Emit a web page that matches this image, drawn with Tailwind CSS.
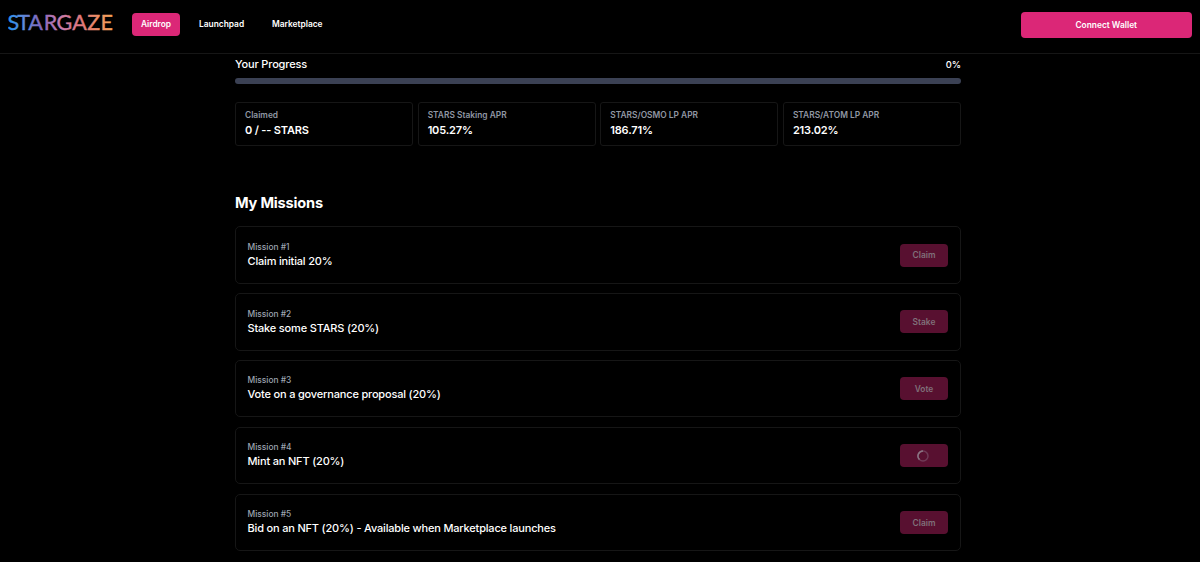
<!DOCTYPE html>
<html lang="en">
<head>
  <meta charset="UTF-8" />
  <meta name="viewport" content="width=device-width, initial-scale=1.0" />
  <title>Stargaze Airdrop</title>
  <script src="https://cdn.jsdelivr.net/npm/@tailwindcss/browser@4"></script>
</head>
<body class="h-screen overflow-hidden bg-black text-white font-['Inter',sans-serif]">
  <header class="flex h-[54px] items-start border-b border-[#161616] pl-2 pr-2">
    <svg class="mt-[10px] h-6 w-[106px]" viewBox="0 0 106 24" role="img" aria-label="Stargaze">
      <defs>
        <linearGradient id="logo" x1="0" y1="20" x2="104" y2="4" gradientUnits="userSpaceOnUse">
          <stop offset="0" stop-color="#2590ee" />
          <stop offset="0.15" stop-color="#5b8bdc" />
          <stop offset="0.32" stop-color="#8367bd" />
          <stop offset="0.5" stop-color="#c77cae" />
          <stop offset="0.7" stop-color="#e27779" />
          <stop offset="1" stop-color="#f5a356" />
        </linearGradient>
      </defs>
      <text x="-0.5 9.2 20.3 35.8 48.4 64.2 79.3 92.6" y="19.8" fill="url(#logo)" stroke="url(#logo)" stroke-width="0.4" class="font-['Lato',sans-serif] text-[21.5px]">STARGAZE</text>
    </svg>

    <nav class="ml-[18px] mt-[12.5px] flex h-[23.5px] items-center text-[8.4px] leading-[13px] font-semibold">
      <a href="#" class="flex h-[23.5px] w-12 items-center justify-center rounded-[4px] bg-[#db2777] pt-[1px]">Airdrop</a>
      <a href="#" class="ml-[19px] w-[73px] pt-[1px]">Launchpad</a>
      <a href="#" class="pt-[1px]">Marketplace</a>
    </nav>

    <button class="ml-auto mt-[11.5px] h-[26px] w-[171.5px] rounded-[4px] bg-[#db2777] pt-[1px] text-[8.4px] font-semibold">Connect Wallet</button>
  </header>

  <main class="ml-[235px] w-[726px]">
    <div class="flex h-[24px] items-start justify-between pt-[2px] leading-[17px]">
      <span class="text-[11px] font-medium tracking-[-0.16px]">Your Progress</span>
      <span class="text-[9.33px] font-medium">0%</span>
    </div>
    <div class="h-[5.5px] rounded-full bg-[#3b4154]"></div>

    <dl class="mt-[18.5px] grid grid-cols-4 gap-[4.5px]">
      <div class="h-11 rounded-[3px] border border-[#161616] pl-[9px] pt-[6px]">
        <dt class="text-[8.4px] leading-[13px] font-semibold text-[#9097a3]">Claimed</dt>
        <dd class="text-[11px] leading-[17px] font-semibold tracking-[-0.16px]">0 / -- STARS</dd>
      </div>
      <div class="h-11 rounded-[3px] border border-[#161616] pl-[9px] pt-[6px]">
        <dt class="text-[8.4px] leading-[13px] font-semibold text-[#9097a3]">STARS Staking APR</dt>
        <dd class="text-[11px] leading-[17px] font-semibold tracking-[-0.16px]">105.27%</dd>
      </div>
      <div class="h-11 rounded-[3px] border border-[#161616] pl-[9px] pt-[6px]">
        <dt class="text-[8.4px] leading-[13px] font-semibold text-[#9097a3]">STARS/OSMO LP APR</dt>
        <dd class="text-[11px] leading-[17px] font-semibold tracking-[-0.16px]">186.71%</dd>
      </div>
      <div class="h-11 rounded-[3px] border border-[#161616] pl-[9px] pt-[6px]">
        <dt class="text-[8.4px] leading-[13px] font-semibold text-[#9097a3]">STARS/ATOM LP APR</dt>
        <dd class="text-[11px] leading-[17px] font-semibold tracking-[-0.16px]">213.02%</dd>
      </div>
    </dl>

    <h2 class="mt-[45px] text-[14.6px] leading-6 font-bold tracking-[-0.2px]">My Missions</h2>

    <ul class="mt-[11.3px] flex flex-col gap-[9.35px]">
      <li class="flex h-[57.5px] items-center justify-between rounded-[5px] border border-[#161616] pl-[11.5px] pr-[12px]">
        <div>
          <p class="text-[8.4px] leading-[12px] font-medium text-[#9ca3af]">Mission #1</p>
          <p class="text-[11px] leading-[16.6px] font-medium tracking-[-0.18px]">Claim initial 20%</p>
        </div>
        <button class="h-[23px] w-12 rounded-[4px] bg-[#581030] pt-[1px] text-[8.4px] font-semibold text-[#80707a]" disabled>Claim</button>
      </li>
      <li class="flex h-[57.5px] items-center justify-between rounded-[5px] border border-[#161616] pl-[11.5px] pr-[12px]">
        <div>
          <p class="text-[8.4px] leading-[12px] font-medium text-[#9ca3af]">Mission #2</p>
          <p class="text-[11px] leading-[16.6px] font-medium tracking-[-0.18px]">Stake some STARS (20%)</p>
        </div>
        <button class="h-[23px] w-12 rounded-[4px] bg-[#581030] pt-[1px] text-[8.4px] font-semibold text-[#80707a]" disabled>Stake</button>
      </li>
      <li class="flex h-[57.5px] items-center justify-between rounded-[5px] border border-[#161616] pl-[11.5px] pr-[12px]">
        <div>
          <p class="text-[8.4px] leading-[12px] font-medium text-[#9ca3af]">Mission #3</p>
          <p class="text-[11px] leading-[16.6px] font-medium tracking-[-0.18px]">Vote on a governance proposal (20%)</p>
        </div>
        <button class="h-[23px] w-12 rounded-[4px] bg-[#581030] pt-[1px] text-[8.4px] font-semibold text-[#80707a]" disabled>Vote</button>
      </li>
      <li class="flex h-[57.5px] items-center justify-between rounded-[5px] border border-[#161616] pl-[11.5px] pr-[12px]">
        <div>
          <p class="text-[8.4px] leading-[12px] font-medium text-[#9ca3af]">Mission #4</p>
          <p class="text-[11px] leading-[16.6px] font-medium tracking-[-0.18px]">Mint an NFT (20%)</p>
        </div>
        <button class="flex h-[23px] w-12 items-center justify-center rounded-[4px] bg-[#581030] pr-[3px]" aria-label="Loading" disabled>
          <svg class="size-3" viewBox="0 0 12 12" fill="none" stroke-width="1.5">
            <circle cx="6" cy="6" r="5" stroke="#6f3a56" />
            <path d="M2.5 9.6A5 5 0 0 1 6 1" stroke="#8a7482" />
          </svg>
        </button>
      </li>
      <li class="flex h-[57.5px] items-center justify-between rounded-[5px] border border-[#161616] pl-[11.5px] pr-[12px]">
        <div>
          <p class="text-[8.4px] leading-[12px] font-medium text-[#9ca3af]">Mission #5</p>
          <p class="text-[11px] leading-[16.6px] font-medium tracking-[-0.18px]">Bid on an NFT (20%) - Available when Marketplace launches</p>
        </div>
        <button class="h-[23px] w-12 rounded-[4px] bg-[#581030] pt-[1px] text-[8.4px] font-semibold text-[#80707a]" disabled>Claim</button>
      </li>
    </ul>
  </main>
</body>
</html>
